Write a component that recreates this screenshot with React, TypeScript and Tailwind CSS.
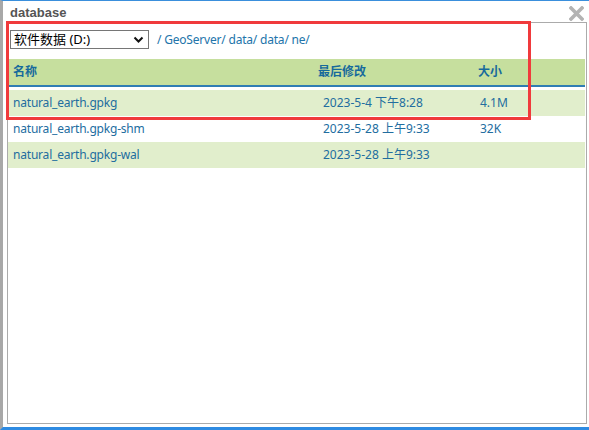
import React from "react";

type Row = { name: string; modified: string; size: string };

const rows: Row[] = [
  { name: "natural_earth.gpkg", modified: "2023-5-4 下午8:28", size: "4.1M" },
  { name: "natural_earth.gpkg-shm", modified: "2023-5-28 上午9:33", size: "32K" },
  { name: "natural_earth.gpkg-wal", modified: "2023-5-28 上午9:33", size: "" },
];

const font = { fontFamily: '"Noto Sans", "Noto Sans CJK SC", sans-serif' };

function CloseIcon() {
  return (
    <svg width="15" height="15" viewBox="0 0 15 15">
      <path d="M2 2 L13 13 M13 2 L2 13" stroke="#b3b3b3" strokeWidth="3.6" strokeLinecap="square" />
    </svg>
  );
}

function DriveSelect() {
  return (
    <div className="w-[139px] h-[19px] border border-[#767676] flex items-center justify-between pl-[3px] pr-[4px] bg-white">
      <span className="text-[13px] leading-none text-black">软件数据 (D:)</span>
      <svg width="11" height="8" viewBox="0 0 11 8">
        <path d="M1.5 1.5 L5.5 5.5 L9.5 1.5" fill="none" stroke="#111" strokeWidth="2" />
      </svg>
    </div>
  );
}

export default function App() {
  return (
    <div
      className="w-[589px] h-[430px] bg-white border-l-[3px] border-l-[#a8a8a8] border-t border-t-[#3a8fdc] border-b-[3px] border-b-[#2e8be2] flex flex-col relative overflow-hidden"
      style={font}
    >
      {/* title bar */}
      <div className="h-[21px] shrink-0 flex items-start justify-between pl-[7px] pr-[5px]">
        <span
          className="text-[13px] font-bold text-[#555555] leading-none pt-[5px]"
          style={{ fontFamily: '"Liberation Sans", Arial, sans-serif' }}
        >
          database
        </span>
        <span className="pt-[5px]">
          <CloseIcon />
        </span>
      </div>

      {/* panel */}
      <div className="ml-[4px] w-[580px] h-[402px] shrink-0 border border-[#ababab] flex flex-col">
        <div className="h-[36px] flex items-start pt-[7px] pl-[2px] gap-[8px]">
          <DriveSelect />
          <span className="text-[12px] leading-[19px] text-[#2274aa] tracking-[-0.2px]">/ GeoServer/ data/ data/ ne/</span>
        </div>

        <div className="grid grid-cols-[305px_160px_1fr] h-[26px] bg-[#c6df9e] items-center text-[12px] font-bold text-[#166a9c] mr-[1px]">
          <span className="pl-[5px]">名称</span>
          <span className="pl-[5px]">最后修改</span>
          <span className="pl-[5px]">大小</span>
        </div>
        <div className="h-[2px] bg-[#2f7db3] mr-[1px]" />
        <div className="h-[3px]" />

        {rows.map((r, i) => (
          <div
            key={r.name}
            className={
              "grid grid-cols-[305px_160px_1fr] h-[26px] items-center text-[12px] text-[#226d9f] mr-[1px] " +
              (i % 2 === 0 ? "bg-[#e1eecc]" : "bg-white")
            }
          >
            <span className="pl-[5px] tracking-[-0.2px]">{r.name}</span>
            <span className="pl-[10px]">{r.modified}</span>
            <span className="pl-[7px]">{r.size}</span>
          </div>
        ))}
      </div>

      {/* red highlight annotation */}
      <div className="absolute left-[3px] top-[20px] w-[525px] h-[99px] border-[3px] border-[#f03a3c] pointer-events-none" />
    </div>
  );
}
